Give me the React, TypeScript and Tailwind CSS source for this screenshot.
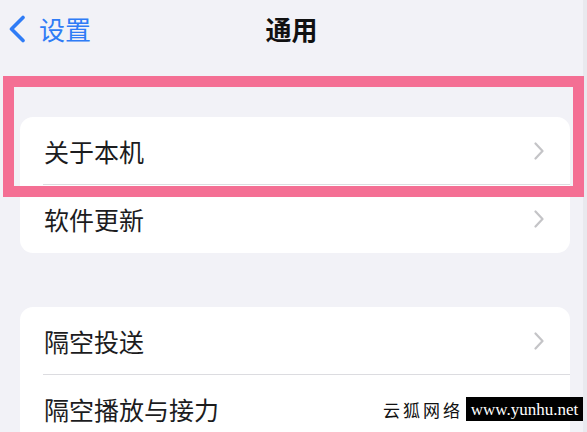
import React from "react";

const Chevron = () => (
  <svg width="10" height="18" viewBox="0 0 10 18" fill="none">
    <path d="M1.5 1.5 L8.5 9 L1.5 16.5" stroke="#c4c4c7" strokeWidth="2.2" strokeLinecap="round" strokeLinejoin="round" />
  </svg>
);

const Row = ({ label, last }: { label: string; last?: boolean }) => (
  <div className="relative shrink-0 h-[68px] flex items-center justify-between pl-[24px] pr-[26px]">
    <span className="text-[25px] text-[#1c1c1e] leading-none">{label}</span>
    <Chevron />
    {!last && <div className="absolute bottom-0 left-[23px] right-0 h-px bg-[#dcdce0]" />}
  </div>
);

export default function App() {
  return (
    <div
      className="relative w-[587px] h-[432px] overflow-hidden bg-[#f2f2f7] flex"
      style={{ fontFamily: '"Noto Sans CJK SC", "Noto Sans", sans-serif' }}
    >
      <div className="flex-1 flex flex-col">
        <div className="shrink-0 h-[58px] grid grid-cols-[1fr_auto_1fr] items-center">
          <div className="flex items-center pl-[8px] gap-[13px] text-[#2f7cf6]">
            <svg width="18" height="28" viewBox="0 0 18 28" fill="none">
              <path d="M15 2.5 L3.5 14 L15 25.5" stroke="#2f7cf6" strokeWidth="3.6" strokeLinecap="round" strokeLinejoin="round" />
            </svg>
            <span className="text-[26px] leading-none">设置</span>
          </div>
          <div className="text-[26px] font-bold text-[#111] leading-none">通用</div>
          <div />
        </div>
        <div className="shrink-0 mt-[59px] ml-[20px] w-[550px] bg-white rounded-[13px] flex flex-col">
          <Row label="关于本机" />
          <Row label="软件更新" last />
        </div>
        <div className="shrink-0 mt-[54px] ml-[20px] w-[550px] bg-white rounded-[13px] flex flex-col">
          <Row label="隔空投送" />
          <Row label="隔空播放与接力" last />
        </div>
      </div>
      <div className="w-[4px] bg-[#e9e9ee]" />

      <div className="absolute left-[3px] top-[76px] w-[581px] h-[121px] border-[11px] border-[#f46f94]" />

      <div className="absolute left-[383px] top-[397px] flex items-center">
        <span
          className="text-[17px] tracking-[3px] text-[#111] leading-none"
          style={{ fontFamily: '"Noto Sans CJK SC", serif' }}
        >
          云狐网络
        </span>
        <div
          className="ml-[3px] w-[117px] h-[24px] bg-black text-white text-[17px] leading-none flex items-center justify-center"
          style={{ fontFamily: '"Liberation Serif", serif' }}
        >
          www.yunhu.net
        </div>
      </div>
    </div>
  );
}
